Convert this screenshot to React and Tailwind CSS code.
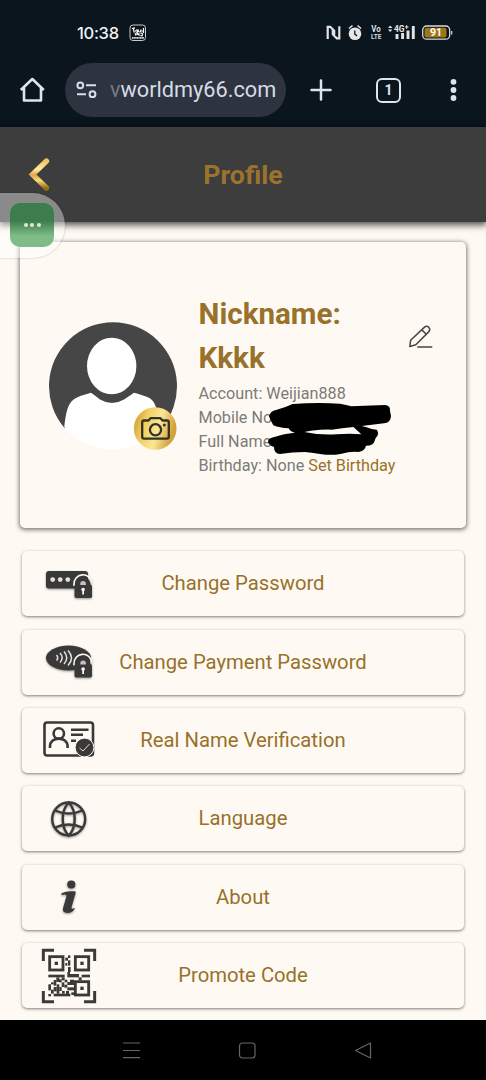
import React from "react";

const INK = "#393939";

const QR_BLOCKS = [
  [90, 31, 7, 8], [82, 38, 8, 9], [90, 46, 7, 16], [82, 54, 6, 8], [90, 66, 8, 15],
  [31, 89, 49, 8], [88, 81, 8, 16], [96, 87, 27, 10], [131, 89, 25, 8], [122, 97, 9, 9],
  [55, 97, 9, 14], [47, 105, 8, 17], [71, 97, 9, 9], [63, 103, 8, 9], [80, 104, 8, 8],
  [31, 118, 8, 18], [39, 112, 8, 6], [39, 134, 8, 12], [47, 126, 9, 13], [56, 118, 8, 28],
  [64, 126, 7, 12], [71, 112, 8, 14], [79, 119, 9, 9], [88, 111, 20, 9], [96, 104, 12, 8],
  [88, 127, 20, 9], [72, 138, 8, 8], [84, 138, 9, 9], [47, 146, 50, 8], [31, 147, 8, 7], [100, 142, 8, 8],
];

function Lock({ y }) {
  return (
    <g transform={`translate(33 ${y})`}>
      <path d="M0 9.500V8a8.700 8.700 0 0 1 17.800-1.500" fill="none" stroke="#fffaf3" strokeWidth="1.600" />
      <path d="M4 10V8a5.100 5.100 0 0 1 10.200 0v2" fill="none" stroke={INK} strokeWidth="4.400" />
      <rect x="0.5" y="8" width="17.500" height="13.500" rx="1.800" fill={INK} />
      <path d="M6.300 8.500V7.300a2.700 2.700 0 0 1 5.600 0v1.200" fill="#c5c1bb" />
      <circle cx="9.100" cy="13" r="1.800" fill="#fffaf3" />
      <path d="M8.300 13h1.700v5H8.300z" fill="#fffaf3" />
    </g>
  );
}

const Icon = ({ children, shadow = true }) => (
  <svg viewBox="0 0 56 56" className={shadow ? "h-14 w-14 drop-shadow-[0_1px_1px_rgba(0,0,0,0.4)]" : "h-14 w-14"}>
    {children}
  </svg>
);

const items = [
  {
    label: "Change Password",
    icon: (
      <Icon>
        <rect x="5" y="15" width="42" height="17.500" rx="3" fill={INK} />
        {[11.7, 19.2, 26.8].map((x) => <circle key={x} cx={x} cy="23.600" r="2.400" fill="#e6e2dc" />)}
        <Lock y={20.5} />
      </Icon>
    ),
  },
  {
    label: "Change Payment Password",
    icon: (
      <Icon>
        <ellipse cx="27.500" cy="24" rx="22.500" ry="12.400" fill={INK} />
        <path d="M15.500 21q2.400 2.800 0 5.500M19 19q4.300 4.700 0 9.500M23 17.500q5.400 6.200 0 12.500M27 16.500q7 7.500 0 15" fill="none" stroke="#e6e2dc" strokeWidth="1.500" />
        <Lock y={22} />
      </Icon>
    ),
  },
  {
    label: "Real Name Verification",
    icon: (
      <Icon shadow={false}>
        <g fill="none" stroke={INK} strokeWidth="2.600">
          <rect x="3.500" y="10.500" width="48.500" height="33" rx="2.500" />
          <circle cx="17.800" cy="21.500" r="5.200" />
          <path d="M9 36v-1.500c0-10.500 17.600-10.500 17.600 0V36M30 17.700h17.500M30 22.800h12M30 28.800h5" />
        </g>
        <circle cx="43.500" cy="35.500" r="9.400" fill={INK} stroke="#fffaf3" strokeWidth="1" />
        <path d="M38.500 36l3.500 3 6.500-7" fill="none" stroke="#dedad4" strokeWidth="1" />
      </Icon>
    ),
  },
  {
    label: "Language",
    icon: (
      <Icon>
        <g fill="none" stroke={INK} strokeWidth="2.400">
          <circle cx="27.700" cy="28" r="16.500" />
          <path d="M27.700 11.500c-8 8-8 25 0 33 8-8 8-25 0-33ZM14 19.500q13.700 6 27.400 0M14 36.500q13.700-6 27.400 0" />
        </g>
      </Icon>
    ),
  },
  {
    label: "About",
    icon: (
      <Icon>
        <circle cx="30.300" cy="15.500" r="4.100" fill={INK} />
        <path d="M20.500 24.300q5.500-2.500 10.500-2h2.900q1 .2.700 1.600l-4 14q-.6 2 .9 1.800l2.700-.8q-2.400 5-8 5-5.500-.2-4-5.300l3.200-11.200q.4-1.800-1.400-1.900l-3.500.4z" fill={INK} />
      </Icon>
    ),
  },
  {
    label: "Promote Code",
    icon: (
      <Icon shadow={false}>
        <g transform="translate(-3 -3) scale(.33333)" fill="#3a3a38">
          <path d="M16 48V16H48M138 16h32V48M16 138v32H48M138 170h32V138" fill="none" stroke="#3a3a38" strokeWidth="9" />
          {[[31, 31], [108, 31], [108, 106]].map(([x, y]) => (
            <g key={`${x}-${y}`}>
              <rect x={x + 4} y={y + 4} width="40" height="40" fill="none" stroke="#3a3a38" strokeWidth="8.500" />
              <rect x={x + 19} y={y + 19} width="10" height="10" />
            </g>
          ))}
          {QR_BLOCKS.map(([x, y, w, h]) => <rect key={`${x}-${y}`} x={x} y={y} width={w} height={h} />)}
        </g>
      </Icon>
    ),
  },
];

function StatusBar() {
  return (
    <div className="flex h-[53px] items-center pl-[77px] pr-[33px] pt-3 text-[#f0f2f5]">
      <span className="w-[43px] font-['Inter'] text-[16.500px] font-medium leading-5 tracking-[-0.3px]">10:38</span>
      <svg className="ml-[9px] h-[18px] w-[18px]" viewBox="0 0 18 18">
        <rect x="1" y="1" width="15.500" height="15.500" rx="3" fill="none" stroke="#c5c7ca" />
        <path d="M3 4.500l3-.7M4.300 4.500l1 4M6.500 7q1.800-2.500 2 0t-2 .3M9 5.500l.7 2.300 1.700.2M12 5.500l-.5 2.500M14.500 4v5M12.500 7h2M6 9.300l1 2.200M8 11V9.200l2 1.800V9.200M11.500 9.300q2.500-.5 2 1.500t-2 .3" fill="none" stroke="#fff" strokeWidth="1.200" />
        <path d="M3 13.800h12" stroke="#ddd" strokeWidth="1.800" strokeDasharray="1.3 .3" />
      </svg>
      <svg className="ml-auto h-[18px] w-[128px]" viewBox="326 24 128 18">
        <path d="M328.700 39V26.800h2.500l4 4v5.400M340.300 26.300v12h-2.500l-4-4V29" fill="none" stroke="#e1e2e3" strokeWidth="2.200" />
        <circle cx="356" cy="33.700" r="6.300" fill="#e6e7e8" />
        <path d="M350 28.500l3.500-3M362 28.500l-3.500-3" stroke="#e6e7e8" strokeWidth="1.600" />
        <path d="M355.800 30.500v3.600l2.300 1.800" fill="none" stroke="#0b151e" strokeWidth="1.300" />
        <text x="372.300" y="32" fontSize="8.500" fontWeight="bold" fill="#dcdddf" fontFamily="Roboto" textLength="9.500" lengthAdjust="spacingAndGlyphs">Vo</text>
        <text x="372" y="39.300" fontSize="8" fontWeight="bold" fill="#dcdddf" fontFamily="Roboto" textLength="10.500" lengthAdjust="spacingAndGlyphs">LTE</text>
        <path d="M389 28l2.200-2.500 2.200 2.500zM389 29.500l2.200 2.500 2.200-2.500z" fill="#e2e4e5" />
        <text x="395" y="31.800" fontSize="9" fontWeight="bold" fill="#e8e9ea" fontFamily="Roboto" textLength="10.500" lengthAdjust="spacingAndGlyphs">4G</text>
        <path d="M406 27h3.500M407.700 25.200v3.600" stroke="#eee" />
        <path d="M398 39v-5M403.600 39v-6M409 39v-8.500M414.300 39V26" stroke="#e2e4e5" strokeWidth="2.900" />
        <rect x="423.700" y="26" width="27" height="13.200" rx="4" fill="#0b151e" stroke="#dbdcdb" strokeWidth="1.300" />
        <rect x="425.500" y="27.800" width="22" height="9.600" rx="2" fill="#a07716" />
        <path d="M452.700 31v3.500" stroke="#dbdcdb" strokeWidth="1.200" />
        <text x="431" y="36.400" fontSize="10.500" fontWeight="bold" fill="#fff" fontFamily="Roboto" textLength="12" lengthAdjust="spacingAndGlyphs">91</text>
      </svg>
    </div>
  );
}

function BrowserBar() {
  return (
    <div className="flex h-[74px] items-center pl-[18px]">
      <svg className="h-7 w-7" viewBox="0 0 28 28" fill="none" stroke="#dde3f0" strokeWidth="2.600" strokeLinejoin="round">
        <path d="M2.800 14 14.300 3 25.800 14M6 11.500V24.500h17V11.500" />
      </svg>
      <div className="ml-[19px] flex h-[54px] w-[221px] items-center rounded-full bg-[#2d3440] pl-[10px]">
        <svg className="h-5 w-[22px]" viewBox="0 0 22 20" fill="none" stroke="#d8deea" strokeWidth="2">
          <circle cx="5.300" cy="5.300" r="2.900" /><path d="M11 5.300h10M2 14.200h9" /><circle cx="17.500" cy="14.200" r="2.900" />
        </svg>
        <span className="ml-[13px] w-[166px] whitespace-nowrap font-['Roboto'] text-[21.700px] leading-7 text-[#d6dbe6]">
          <span className="text-[#747b87]">v</span>worldmy66.com
        </span>
      </div>
      <svg className="ml-[23px] h-6 w-6" viewBox="0 0 24 24" stroke="#dde3f0" strokeWidth="2.500" strokeLinecap="round"><path d="M2.500 12h19M12 2.500v19" /></svg>
      <div className="ml-[43px] flex h-[25px] w-[25px] items-center justify-center rounded-[6px] border-[2.400px] border-[#dde3f0] font-['Roboto'] text-[14px] font-bold leading-none text-[#dde3f0]">1</div>
      <svg className="ml-[48px] h-6 w-2" viewBox="0 0 8 24" fill="#dde3f0"><circle cx="4.500" cy="3.800" r="2.900" /><circle cx="4.500" cy="12" r="2.900" /><circle cx="4.500" cy="20" r="2.900" /></svg>
    </div>
  );
}

function Avatar() {
  return (
    <svg className="mt-[78.500px] h-[130px] w-[130px] shrink-0" viewBox="0 0 130 130">
      <defs>
        <clipPath id="avatar-body"><circle cx="65" cy="64" r="64.500" /></clipPath>
        <linearGradient id="coin" x1="0" y1="0" x2="1" y2="0.300">
          <stop offset="0" stopColor="#c69327" /><stop offset=".35" stopColor="#f2cf62" /><stop offset=".65" stopColor="#fae795" /><stop offset="1" stopColor="#d4a23a" />
        </linearGradient>
      </defs>
      <path d="M16.500 107A64 64 0 1 1 113.500 107z" fill="#464646" />
      <ellipse cx="63.700" cy="45" rx="24.700" ry="28.300" fill="#fff" />
      <path clipPath="url(#avatar-body)" d="M16 130v-22C18 90 20 81 28 77c6-3 11-4 15-5.200q5 3.500 9 6.700 12 7 24 0 5-3.200 10-6.700c5 1 10 3 15 5 7 4 8 12 12 30v25z" fill="#fff" />
      <circle cx="107.200" cy="107.500" r="21.300" fill="url(#coin)" />
      <g fill="none" stroke="#343128" strokeWidth="2.300" strokeLinejoin="round">
        <path d="M96 99.500h4.500l2-2.300h10l2 2.300h4.500q1.800 0 1.800 1.800v14.500q0 1.800-1.800 1.800H96q-1.800 0-1.800-1.800v-14.500q0-1.800 1.800-1.800Z" />
        <circle cx="107.500" cy="108.800" r="5.600" />
      </g>
      <circle cx="116.300" cy="104" r="1.500" fill="#343128" />
    </svg>
  );
}

export default function App() {
  return (
    <div className="relative flex h-[1080px] w-[486px] flex-col overflow-hidden bg-[#fefaf3] font-['Roboto',sans-serif]">
      <div className="h-[127px] shrink-0 bg-[#0b151e]"><StatusBar /><BrowserBar /></div>
      <header className="z-10 flex h-[95px] shrink-0 items-center bg-[#3d3d3d] pl-[27px] shadow-[0_2px_7px_1px_rgba(0,0,0,0.7)]">
        <svg className="h-9 w-6" viewBox="0 0 24 36">
          <defs><linearGradient id="gold" x1="0" y1="0" x2="0" y2="1"><stop offset="0" stopColor="#eec467" /><stop offset=".3" stopColor="#ffeaa0" /><stop offset=".52" stopColor="#e4a14c" /><stop offset=".72" stopColor="#f8dc75" /><stop offset="1" stopColor="#9b6b10" /></linearGradient></defs>
          <path d="M19.500 4 5.500 17.500l14 13.500" fill="none" stroke="url(#gold)" strokeWidth="5.400" strokeLinecap="round" />
        </svg>
        <h1 className="ml-[101px] w-[182px] text-center text-[26.700px] font-bold leading-8 text-[#9b732c]">Profile</h1>
      </header>
      <main className="flex grow flex-col px-[22px] pt-5">
        <section className="-mx-[2px] flex h-[286px] shrink-0 rounded-[5px] bg-[#fefaf3] pl-7 shadow-[0_1px_4px_1px_rgba(0,0,0,0.5)]">
          <Avatar />
          <div className="ml-5 w-[208px] whitespace-nowrap pl-[0.5px] pt-[49.500px] text-[16.200px] leading-[24.300px] text-[#7d7b78]">
            <h2 className="mb-px text-[29.600px] font-bold leading-[44.500px] text-[#98712a]">Nickname:<br />Kkkk</h2>
            <p>Account: Weijian888</p>
            <div className="relative">
              <p>Mobile No</p>
              <p>Full Name</p>
              <svg className="absolute left-[69px] top-[-3px] h-[54px] w-[126px]" viewBox="234 336 378 162">
                <path fillRule="evenodd" fill="#000" d="M237 376Q241 360 258 357Q285 350 308 339Q380 334 450 338Q470 341 484 346L585 342Q602 344 600 360L603 375Q602 396 582 397L515 405L530 409Q545 416 560 416Q567 425 562 435Q556 440 554 449Q551 464 528 464Q525 480 505 483Q480 481 455 488Q425 494 395 490Q370 486 345 483Q305 483 270 489Q252 488 252 468Q235 464 234 450Q237 440 256 437Q280 428 315 425Q300 422 296 412Q268 411 250 403Q243 392 237 376ZM343 423L362 419Q400 415 425 416Q455 412 490 408L514 430Q480 427 440 430Q390 433 343 423Z" />
              </svg>
            </div>
            <p>Birthday: None <span className="text-[#98712a]">Set Birthday</span></p>
          </div>
          <svg className="ml-0 mt-[80.500px] h-7 w-7" viewBox="0 0 28 28" fill="none" stroke="#464542" strokeWidth="1.500" strokeLinejoin="round">
            <path d="m3.800 23.500.8-6.200L18.800 3.900q2-1.500 4.100.6 1.700 1.900 0 4.100L9.800 21.800zM15.800 6.900l4.500 4.400M11.300 24h15" />
          </svg>
        </section>
        <nav className="mt-[23.200px] flex flex-col gap-[13.400px]">
          {items.map((item) => (
            <button key={item.label} className="flex h-[65px] shrink-0 items-center rounded-[5px] bg-[#fefaf3] pl-[19px] shadow-[0_1px_3px_rgba(0,0,0,0.5)]">
              {item.icon}
              <span className="w-[292px] pb-px text-center text-[20.250px] leading-6 text-[#98712a]">{item.label}</span>
            </button>
          ))}
        </nav>
      </main>
      <footer className="flex h-[60px] shrink-0 items-center justify-between bg-black pl-[121px] pr-[113px]">
        <svg className="h-5 w-5" viewBox="0 0 20 20" stroke="#666" strokeWidth="1.200"><path d="M2 3h17M2 10.500h17M2 17.700h17" /></svg>
        <svg className="h-5 w-5" viewBox="0 0 20 20" fill="none" stroke="#666" strokeWidth="1.200"><rect x="2.500" y="3" width="15.500" height="15" rx="3" /></svg>
        <svg className="h-5 w-5" viewBox="0 0 20 20" fill="none" stroke="#666" strokeWidth="1.200" strokeLinejoin="round"><path d="M2.500 10.500 17.500 3v15z" /></svg>
      </footer>
      <div className="absolute left-0 top-[193px] z-20 flex h-[65px] w-[65px] items-center rounded-r-full bg-white/40 pl-[10px] shadow-[0_0_2px_rgba(0,0,0,0.3)]">
        <div className="mb-px flex h-[44px] w-[44px] items-center justify-center gap-[2.500px] rounded-[10px] bg-gradient-to-b from-[#3d7d4b] from-40% to-[#7fbc89] to-75%">
          <i className="h-1 w-1 rounded-full bg-white/80" /><i className="h-1 w-1 rounded-full bg-white/80" /><i className="h-1 w-1 rounded-full bg-white/80" />
        </div>
      </div>
    </div>
  );
}
